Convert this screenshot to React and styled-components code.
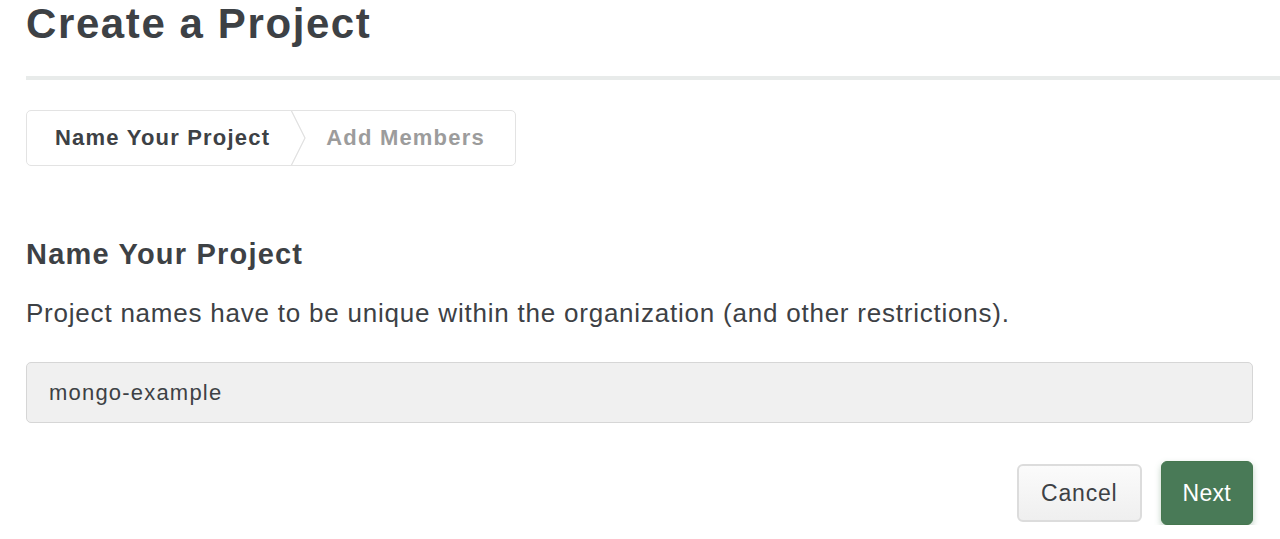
import React from 'react'
import styled, { createGlobalStyle } from 'styled-components'

const GlobalStyle = createGlobalStyle`
  body {
    margin: 0;
    background: #ffffff;
    font-family: "Liberation Sans", Arial, sans-serif;
    color: #3d4145;
  }
`

const Page = styled.div`
  padding: 4px 27px 0 26px;
`

const Title = styled.h1`
  margin: 0;
  font-size: 42px;
  line-height: 40px;
  font-weight: 700;
  letter-spacing: 1.6px;
  color: #3d4145;
`

const Rule = styled.div`
  height: 4px;
  margin: 32px -27px 0 0;
  background: #e8ebea;
`

const Steps = styled.div`
  display: flex;
  align-items: stretch;
  width: 490px;
  height: 56px;
  margin-top: 30px;
  border: 1px solid #e3e3e3;
  border-radius: 5px;
  box-sizing: border-box;
  overflow: hidden;
`

const Step = styled.div`
  display: flex;
  align-items: center;
  padding: ${p => (p.$first ? '0 20px 0 28px' : '0 0 0 20px')};
  font-size: 22px;
  font-weight: 700;
  letter-spacing: 1.2px;
  white-space: nowrap;
  color: ${p => (p.$active ? '#3d4145' : '#9c9c9c')};
`

const Chevron = styled.svg`
  width: 16px;
  height: 56px;
  flex: none;
  margin-top: -1px;
`

const Heading = styled.h2`
  margin: 71px 0 0;
  font-size: 29px;
  line-height: 34px;
  font-weight: 700;
  letter-spacing: 1.2px;
  color: #3d4145;
`

const Text = styled.p`
  margin: 27px 0 0;
  font-size: 26px;
  line-height: 30px;
  letter-spacing: 0.78px;
  color: #3d4145;
`

const Input = styled.input`
  display: block;
  width: 100%;
  height: 61px;
  margin-top: 34px;
  padding: 0 22px;
  box-sizing: border-box;
  background: #f0f0f0;
  border: 1px solid #d6d6d6;
  border-radius: 5px;
  font-family: "Liberation Sans", Arial, sans-serif;
  font-size: 22px;
  letter-spacing: 1.2px;
  color: #3d4145;
  outline: none;
`

const Actions = styled.div`
  display: flex;
  justify-content: flex-end;
  align-items: center;
  gap: 19px;
  margin-top: 38px;
`

const Button = styled.button`
  height: ${p => (p.$primary ? '64px' : '58px')};
  padding: 0 ${p => (p.$primary ? '21px' : '22px')};
  border-radius: 6px;
  font-family: "Liberation Sans", Arial, sans-serif;
  font-size: 23px;
  letter-spacing: ${p => (p.$primary ? '0.3px' : '0.8px')};
  cursor: pointer;
  border: ${p => (p.$primary ? '1px solid #46774f' : '2px solid #dcdcdc')};
  background: ${p => (p.$primary ? '#497a57' : 'linear-gradient(#fbfbfb, #efefef)')};
  color: ${p => (p.$primary ? '#ffffff' : '#3d4145')};
  box-shadow: ${p => (p.$primary ? '0 3px 6px rgba(73, 122, 87, 0.35)' : 'none')};
`

export default function App() {
  return (
    <>
      <GlobalStyle />
      <Page>
        <Title>Create a Project</Title>
        <Rule />
        <Steps>
          <Step $first $active>Name Your Project</Step>
          <Chevron viewBox="0 0 16 56">
            <polyline points="1,0 15,28 1,56" fill="none" stroke="#e0e0e0" strokeWidth="1.2" />
          </Chevron>
          <Step>Add Members</Step>
        </Steps>
        <Heading>Name Your Project</Heading>
        <Text>Project names have to be unique within the organization (and other restrictions).</Text>
        <Input defaultValue="mongo-example" />
        <Actions>
          <Button>Cancel</Button>
          <Button $primary>Next</Button>
        </Actions>
      </Page>
    </>
  )
}
